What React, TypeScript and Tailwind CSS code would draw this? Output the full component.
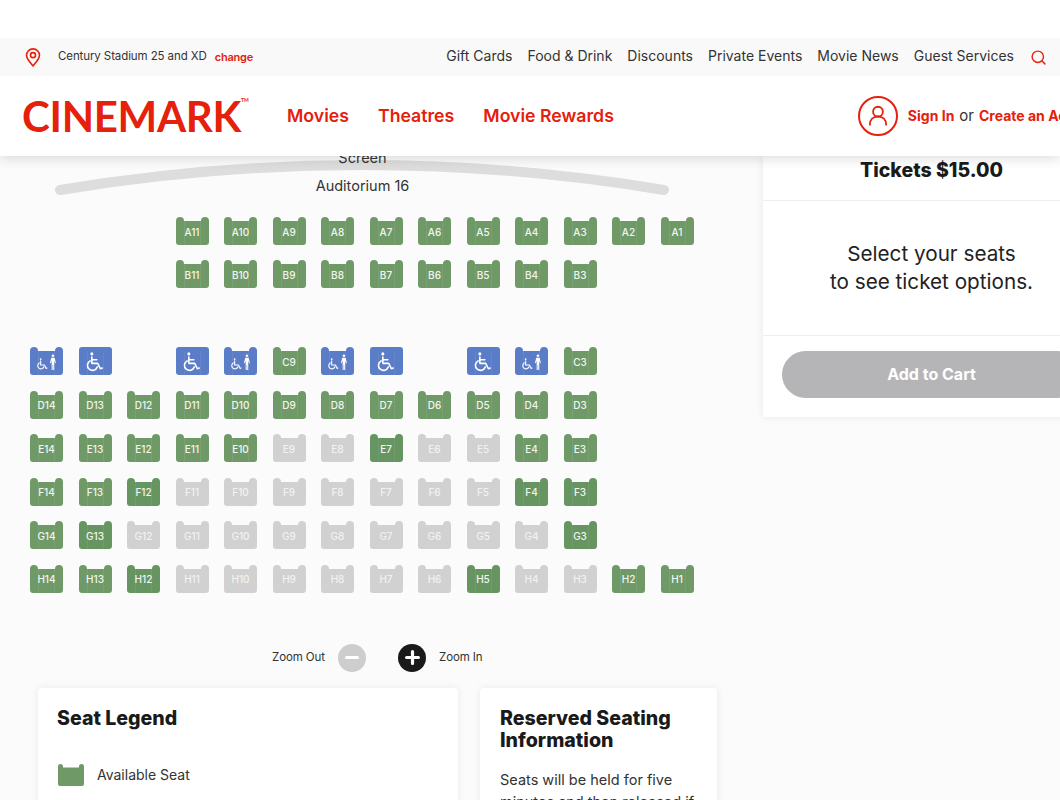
import { Search } from "lucide-react";

type Kind = "ok" | "dark" | "off" | "wheel" | "comp";
type Cell = { label: string; kind: Kind } | null;

const FONT = "font-['Inter','Liberation_Sans',sans-serif]";

// seat numbers run right to left, column 14 first
function row(letter: string, spec: string): Cell[] {
  return spec.split("").map((ch, i) => {
    const label = `${letter}${14 - i}`;
    if (ch === ".") return null;
    if (ch === "g") return { label, kind: "ok" };
    if (ch === "d") return { label, kind: "dark" };
    if (ch === "x") return { label, kind: "off" };
    if (ch === "w") return { label, kind: "wheel" };
    return { label, kind: "comp" };
  });
}

const rows: Cell[][] = [
  row("A", "...ggggggggggg"),
  row("B", "...ggggggggg.."),
  row("-", ".............."),
  row("C", "cw.wcgcw.wcg.."),
  row("D", "gggggggggggg.."),
  row("E", "gggggxxdxxgg.."),
  row("F", "ggdxxxxxxxdd.."),
  row("G", "gdxxxxxxxxxd.."),
  row("H", "ggdxxxxxxdxxgg"),
];

const fills: Record<Kind, string> = {
  ok: "#6f9a68",
  dark: "#679562",
  off: "#d1d1d1",
  wheel: "#5b7cc6",
  comp: "#5b7cc6",
};

function SeatShape({ kind }: { kind: Kind }) {
  const d =
    kind === "wheel"
      ? "M3 0H30a3 3 0 0 1 3 3V25a3 3 0 0 1-3 3H3a3 3 0 0 1-3-3V3a3 3 0 0 1 3-3Z"
      : "M0 4a4 4 0 0 1 8 0H25a4 4 0 0 1 8 0V25a3 3 0 0 1-3 3H3a3 3 0 0 1-3-3Z";
  return (
    <svg viewBox="0 0 33 28" className="col-start-1 row-start-1 block h-7 w-[33px]">
      <path d={d} fill={fills[kind]} />
      {kind !== "off" && (
        <path d="M8.5 4V28M24.5 4V28" stroke="#ffffff" strokeOpacity="0.07" strokeWidth="1" />
      )}
    </svg>
  );
}

function WheelIcon() {
  return (
    <svg viewBox="0 0 20 22" fill="none" stroke="#fff" strokeWidth="1.8" strokeLinecap="round" strokeLinejoin="round" className="h-5 w-[18px]">
      <circle cx="6.5" cy="2" r="1.7" fill="#fff" stroke="none" />
      <path d="M6.5 5.5V12.5H13L16 18.5L18 17.7" />
      <path d="M6.5 8.5H12" />
      <path d="M4.5 9.8a5.6 5.6 0 1 0 8 6.7" />
    </svg>
  );
}

function CompanionIcon() {
  return (
    <svg viewBox="0 0 26 20" fill="none" stroke="#fff" strokeWidth="1.3" strokeLinecap="round" strokeLinejoin="round" className="h-[17px] w-[22px]">
      <circle cx="5.5" cy="6" r="1.1" fill="#fff" stroke="none" />
      <path d="M5.500 8V13H10L12 17L13 16.5" />
      <path d="M3.800 10.5a3.800 3.800 0 1 0 5.600 4.600" />
      <circle cx="20" cy="2" r="1.5" fill="#fff" stroke="none" />
      <path d="M18 4.500H22L23.500 10.500L22.500 10.800L21.500 7.500V19H20.300V13H19.700V19H18.500V7.500L17.500 10.800L16.500 10.500Z" fill="#fff" stroke="none" />
    </svg>
  );
}

function Seat({ cell }: { cell: Cell }) {
  if (!cell) return <div className="h-7 w-[33px]" />;
  const { label, kind } = cell;
  return (
    <div className="grid h-7 w-[33px] place-items-center">
      <SeatShape kind={kind} />
      <div className="z-[1] col-start-1 row-start-1 flex items-center justify-center pt-0.5">
        {kind === "wheel" ? (
          <WheelIcon />
        ) : kind === "comp" ? (
          <CompanionIcon />
        ) : (
          <span className={`text-[10px] font-medium ${kind === "off" ? "text-[#f1f1f1]" : "text-[#f2f6f0]"}`}>{label}</span>
        )}
      </div>
    </div>
  );
}

function Header() {
  return (
    <header className="relative z-10 bg-white shadow-[0_2px_12px_rgba(0,0,0,0.15)]">
      <div className="h-[38px]" />
      <div className="flex h-[38px] items-center bg-[#f9f9f9] pr-[13px] pl-[25px]">
        <svg viewBox="0 0 16 20" fill="none" stroke="#e5200b" strokeWidth="1.7" className="h-[19px] w-4">
          <path d="M8 18.800C4.500 14.800 1.200 11.500 1.200 7.700a6.800 6.800 0 0 1 13.600 0C14.800 11.500 11.500 14.800 8 18.800Z" strokeLinejoin="round" />
          <circle cx="8" cy="7.500" r="2.600" />
        </svg>
        <span className="ml-[17px] text-[11.5px] tracking-[-0.1px] text-[#333]">Century Stadium 25 and XD</span>
        <span className="ml-[8px] text-[11px] font-semibold tracking-[-0.2px] text-[#e5200b]">change</span>
        <nav className="ml-auto flex items-center gap-[15px] pb-0.5 text-sm text-[#333]">
          <span>Gift Cards</span>
          <span>Food &amp; Drink</span>
          <span>Discounts</span>
          <span>Private Events</span>
          <span>Movie News</span>
          <span>Guest Services</span>
          <Search className="mt-0.5 ml-px h-[17px] w-[17px] text-[#e5200b]" strokeWidth={2} />
        </nav>
      </div>
      <div className="flex h-20 w-[1200px] items-center pl-[22px]">
        <div className="flex w-[265px] items-start font-['Lato',sans-serif] text-[#e5200b]">
          <span className="text-[42px] leading-none font-bold tracking-[-0.3px]">CINEMARK</span>
          <span className="mt-[3px] text-[5px] leading-none font-bold">TM</span>
        </div>
        <nav className="flex gap-[29px] text-[17.7px] font-semibold text-[#e5200b]">
          <span>Movies</span>
          <span>Theatres</span>
          <span>Movie Rewards</span>
        </nav>
        <div className="ml-[244px] flex h-10 w-10 items-center justify-center rounded-full border-2 border-[#e5200b]">
          <svg viewBox="0 0 24 24" fill="none" stroke="#e5200b" strokeWidth="1.7" strokeLinecap="round" className="h-[26px] w-[26px]">
            <circle cx="12" cy="8" r="4.500" />
            <path d="M4.500 20c0-4.500 3-7.500 7.500-7.500s7.500 3 7.500 7.500" />
          </svg>
        </div>
        <span className="ml-[10px] text-sm font-bold text-[#e5200b]">Sign In</span>
        <span className="ml-[5px] text-[15px] text-[#333]">or</span>
        <span className="ml-[5px] text-sm font-bold whitespace-nowrap text-[#e5200b]">Create an Account</span>
      </div>
    </header>
  );
}

function SeatMap() {
  return (
    <div className="w-[725px] shrink-0">
      <div className="relative h-[61px]">
        <svg viewBox="0 0 620 50" fill="none" className="absolute top-[-6px] left-[52px] h-[50px] w-[620px]">
          <path d="M8 40Q310 -10 612 40" stroke="#dddddd" strokeWidth="10" strokeLinecap="round" />
        </svg>
        <div className="absolute top-[-9px] left-0 w-full text-center text-[14.5px] text-[#333]">Screen</div>
        <div className="absolute top-[19px] left-0 w-full text-center text-[14.5px] text-[#333]">Auditorium 16</div>
      </div>
      <div className="ml-[30px] grid grid-cols-[repeat(14,33px)] gap-x-[15.5px] gap-y-[15.45px]">
        {rows.map((cells, r) =>
          cells.map((cell, c) => <Seat key={`${r}-${c}`} cell={cell} />)
        )}
      </div>
      <div className="mt-[51px] ml-[272px] flex h-7 items-center text-[11.5px] tracking-[-0.1px] text-[#333]">
        <span className="w-[52px] whitespace-nowrap">Zoom Out</span>
        <span className="ml-[14px] flex h-7 w-7 items-center justify-center rounded-full bg-[#cdcdcd]">
          <span className="h-[3px] w-[14px] rounded-sm bg-white" />
        </span>
        <span className="ml-8 flex h-7 w-7 items-center justify-center rounded-full bg-[#1a1a1a]">
          <svg viewBox="0 0 14 14" className="h-[15px] w-[15px]" stroke="#fff" strokeWidth="3" strokeLinecap="round">
            <path d="M7 1.500V12.500M1.500 7H12.500" />
          </svg>
        </span>
        <span className="ml-[13px]">Zoom In</span>
      </div>
      <div className="mt-4 ml-[38px] flex items-start gap-[22px]">
        <section className="h-[200px] w-[420px] rounded-sm bg-white px-[19px] pt-[19px] shadow-[0_0_8px_rgba(0,0,0,0.07)]">
          <h2 className="text-[19.6px] leading-[22px] font-extrabold text-[#1a1a1a]">Seat Legend</h2>
          <div className="mt-[35px] ml-px flex items-center">
            <svg viewBox="0 0 26 22" className="h-[22px] w-[26px]">
              <path d="M0 2.500a2.500 2.500 0 0 1 5 0V3.500H21V2.500a2.500 2.500 0 0 1 5 0V20a2 2 0 0 1-2 2H2a2 2 0 0 1-2-2Z" fill="#6f9a68" />
            </svg>
            <span className="ml-[13px] text-sm text-[#333]">Available Seat</span>
          </div>
        </section>
        <section className="h-[200px] w-[237px] rounded-sm bg-white px-5 pt-[19px] shadow-[0_0_8px_rgba(0,0,0,0.07)]">
          <h2 className="text-[19.6px] leading-[22px] font-extrabold text-[#1a1a1a]">Reserved Seating Information</h2>
          <p className="mt-[18px] text-[14.5px] leading-[22px] text-[#333]">Seats will be held for five minutes and then released if</p>
        </section>
      </div>
    </div>
  );
}

function TicketPanel() {
  return (
    <aside className="ml-[38px] h-[261px] w-[337px] shrink-0 bg-white shadow-[0_0_8px_rgba(0,0,0,0.08)]">
      <div className="flex h-[45px] items-start justify-center border-b border-[#eeeeee] text-[19.5px] leading-7 font-extrabold text-[#1a1a1a]">
        Tickets $15.00
      </div>
      <div className="flex h-[135px] items-center justify-center border-b border-[#eeeeee] text-center text-[20.7px] leading-7 text-[#222]">
        <p>
          Select your seats
          <br />
          to see ticket options.
        </p>
      </div>
      <div className="px-[19px] pt-[15px]">
        <div className="flex h-[47px] items-center justify-center rounded-full bg-[#b5b5b7] pb-px text-base font-bold text-white">
          Add to Cart
        </div>
      </div>
    </aside>
  );
}

export default function App() {
  return (
    <div className={`h-[800px] w-[1060px] overflow-hidden bg-[#fbfbfb] ${FONT}`}>
      <Header />
      <main className="flex">
        <SeatMap />
        <TicketPanel />
      </main>
    </div>
  );
}
